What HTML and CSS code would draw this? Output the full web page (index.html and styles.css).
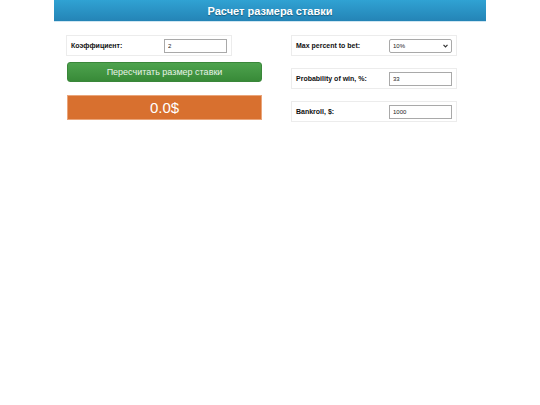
FILE: index.html
```html
<!DOCTYPE html>
<html>
<head>
<meta charset="utf-8">
<link rel="stylesheet" href="styles.css">
</head>
<body>
<div class="page">
  <header class="header">Расчет размера ставки</header>
  <div class="columns">
    <div class="col-left">
      <div class="field">
        <span class="label">Коэффициент:</span>
        <input class="input" type="text" value="2">
      </div>
      <button class="btn-recalc">Пересчитать размер ставки</button>
      <div class="result">0.0$</div>
    </div>
    <div class="col-right">
      <div class="field">
        <span class="label">Max percent to bet:</span>
        <span class="select-wrap">
          <select class="select"><option>10%</option></select>
          <svg class="chevron" width="5" height="4" viewBox="0 0 5 4"><path d="M0.5 0.8 L2.5 2.8 L4.5 0.8" fill="none" stroke="#333" stroke-width="1.2"/></svg>
        </span>
      </div>
      <div class="field">
        <span class="label">Probability of win, %:</span>
        <input class="input" type="text" value="33">
      </div>
      <div class="field">
        <span class="label">Bankroll, $:</span>
        <input class="input" type="text" value="1000">
      </div>
    </div>
  </div>
</div>
</body>
</html>
```
FILE: styles.css
```css
html, body {
  margin: 0;
  padding: 0;
  background: #fff;
  font-family: "Liberation Sans", Arial, sans-serif;
}
.page {
  width: 432px;
  margin: 0 auto;
}
.header {
  height: 21px;
  line-height: 22px;
  background: linear-gradient(#30a2d3, #2484b6);
  border-bottom: 1px solid #cfe6f2;
  color: #fff;
  font-weight: bold;
  font-size: 11px;
  text-align: center;
  text-shadow: 0 1px 1px rgba(0,0,0,0.35);
}
.columns {
  display: flex;
  padding-top: 13px;
}
.col-left {
  margin-left: 12px;
  width: 195px;
  display: flex;
  flex-direction: column;
}
.col-right {
  margin-left: 30px;
  width: 166px;
  display: flex;
  flex-direction: column;
  gap: 12px;
}
.field {
  box-sizing: border-box;
  width: 166px;
  height: 21px;
  border: 1px solid #ececec;
  display: flex;
  align-items: center;
  padding-left: 4px;
  background: #fff;
}
.label {
  font-size: 7px;
  font-weight: bold;
  color: #111;
  width: 93px;
  flex: none;
}
.input {
  box-sizing: border-box;
  width: 63px;
  height: 14px;
  border: 1px solid #a9a9a9;
  padding: 0 3px;
  font-size: 6px;
  font-family: "Liberation Sans", Arial, sans-serif;
  color: #222;
  margin: 0;
  outline: none;
}
.select-wrap {
  position: relative;
  display: block;
  width: 63px;
  height: 14px;
}
.select {
  box-sizing: border-box;
  -webkit-appearance: none;
  appearance: none;
  width: 63px;
  height: 14px;
  font-size: 6px;
  padding: 0 3px;
  margin: 0;
  font-family: "Liberation Sans", Arial, sans-serif;
  border: 1px solid #a9a9a9;
  border-radius: 2px;
  background: #fff;
  color: #222;
  display: block;
}
.chevron {
  position: absolute;
  right: 4px;
  top: 5px;
}
.btn-recalc {
  margin-top: 6px;
  width: 195px;
  height: 20px;
  border: 1px solid #3a873a;
  border-radius: 3px;
  background: linear-gradient(#4ea34e, #388a38);
  color: #e8f3e8;
  font-family: "Liberation Sans", Arial, sans-serif;
  font-size: 9px;
  padding: 0;
  margin-left: 1px;
}
.result {
  margin-top: 13px;
  margin-left: 1px;
  width: 193px;
  height: 23px;
  background: #d8702f;
  border: 1px solid #eaa57a;
  color: #fff;
  font-size: 15px;
  line-height: 23px;
  text-align: center;
}
```
